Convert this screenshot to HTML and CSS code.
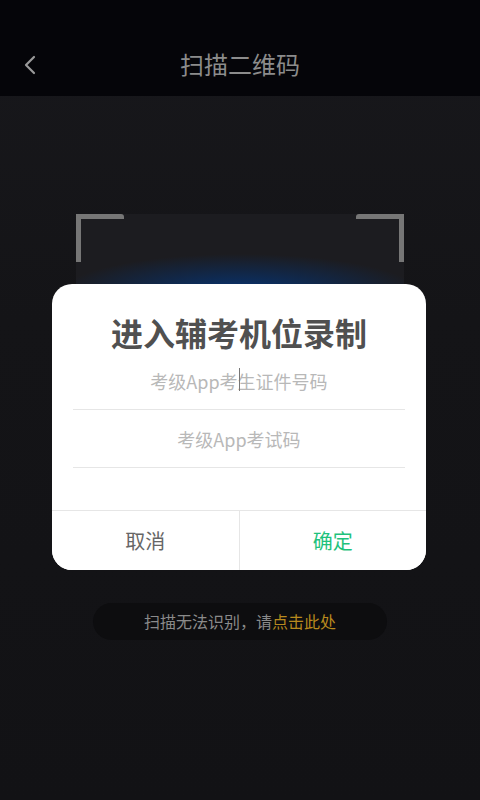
FILE: index.html
```html
<!DOCTYPE html>
<html>
<head>
  <meta charset="utf-8">
  <link rel="stylesheet" href="styles.css">
</head>
<body>
  <div class="page">
    <div class="header">
      <svg class="back" width="14" height="20" viewBox="0 0 14 20">
        <polyline points="11,2 3,10 11,18" fill="none" stroke="#9a9a9a" stroke-width="2.2" stroke-linecap="round" stroke-linejoin="round"/>
      </svg>
      <div class="title">扫描二维码</div>
    </div>
    <div class="main">
      <div class="scan-box">
        <span class="corner corner-left"></span>
        <span class="corner corner-right"></span>
        <div class="scan-glow"></div>
      </div>
      <div class="tip">扫描无法识别，请<span class="tip-link">点击此处</span></div>
    </div>

    <div class="dialog">
      <div class="dialog-title">进入辅考机位录制</div>
      <div class="field">
        <input type="text" placeholder="考级App考生证件号码">
        <span class="caret"></span>
      </div>
      <div class="field">
        <input type="text" placeholder="考级App考试码">
      </div>
      <div class="dialog-buttons">
        <button type="button" class="cancel">取消</button>
        <button type="button" class="ok">确定</button>
      </div>
    </div>
  </div>
</body>
</html>
```

FILE: styles.css
```css
body {
  margin: 0;
  font-family: "Noto Sans CJK SC", "Noto Sans", sans-serif;
}
.page {
  position: relative;
  width: 480px;
  height: 800px;
  overflow: hidden;
  background: linear-gradient(180deg, #18181c 0%, #141417 40%, #121215 100%);
}
.header {
  height: 96px;
  box-sizing: border-box;
  padding-top: 47px;
  background: #050509;
  position: relative;
}
.header .back {
  position: absolute;
  left: 23px;
  top: 55px;
}
.header .title {
  text-align: center;
  color: #8c8c8c;
  font-size: 24px;
  line-height: 34px;
}
.main {
  display: flex;
  flex-direction: column;
  align-items: center;
  padding-top: 118px;
}
.scan-box {
  position: relative;
  width: 328px;
  height: 328px;
  background: #1c1c20;
  overflow: hidden;
}
.scan-glow {
  position: absolute;
  left: 0;
  right: 0;
  top: 40px;
  height: 80px;
  background: radial-gradient(ellipse 55% 50% at 50% 50%, #07347a 0%, rgba(7, 50, 110, 0.7) 35%, rgba(20, 30, 50, 0) 100%);
}
.corner {
  position: absolute;
  top: 0;
  width: 48px;
  height: 48px;
  box-sizing: border-box;
  border-top: 5px solid #767676;
  z-index: 1;
}
.corner-left {
  left: 0;
  border-left: 5px solid #767676;
  border-top-right-radius: 3px;
}
.corner-right {
  right: 0;
  border-right: 5px solid #767676;
  border-top-left-radius: 3px;
}
.tip {
  margin-top: 61px;
  width: 294px;
  height: 37px;
  border-radius: 19px;
  background: #0d0d0f;
  color: #8a8a8a;
  font-size: 16px;
  line-height: 37px;
  text-align: center;
}
.tip-link {
  color: #b88a1e;
}
.dialog {
  position: absolute;
  left: 52px;
  top: 284px;
  width: 374px;
  height: 286px;
  background: #fff;
  border-radius: 20px;
  overflow: hidden;
  display: flex;
  flex-direction: column;
}
.dialog-title {
  padding-top: 28px;
  text-align: center;
  font-size: 32px;
  font-weight: bold;
  line-height: 40px;
  color: #505050;
}
.field {
  position: relative;
  margin: 0 21px;
  height: 57px;
  border-bottom: 1px solid #e6e6e6;
}
.field:first-of-type {
  margin-top: 4px;
}
.field input {
  width: 100%;
  height: 100%;
  box-sizing: border-box;
  border: none;
  outline: none;
  padding: 0;
  text-align: center;
  font-family: "Noto Sans CJK SC", "Noto Sans", sans-serif;
  font-size: 18px;
  background: transparent;
}
.field input::placeholder {
  color: #b8b8b8;
}
.caret {
  position: absolute;
  left: 166px;
  top: 16px;
  width: 1px;
  height: 23px;
  background: #777;
}
.dialog-buttons {
  margin-top: auto;
  display: flex;
  height: 59px;
  border-top: 1px solid #e6e6e6;
}
.dialog-buttons button {
  flex: 1;
  border: none;
  background: #fff;
  font-family: "Noto Sans CJK SC", "Noto Sans", sans-serif;
  font-size: 20px;
  padding: 0;
  cursor: pointer;
}
.dialog-buttons .cancel {
  color: #666;
  border-right: 1px solid #e6e6e6;
}
.dialog-buttons .ok {
  color: #1ec27c;
}
```
